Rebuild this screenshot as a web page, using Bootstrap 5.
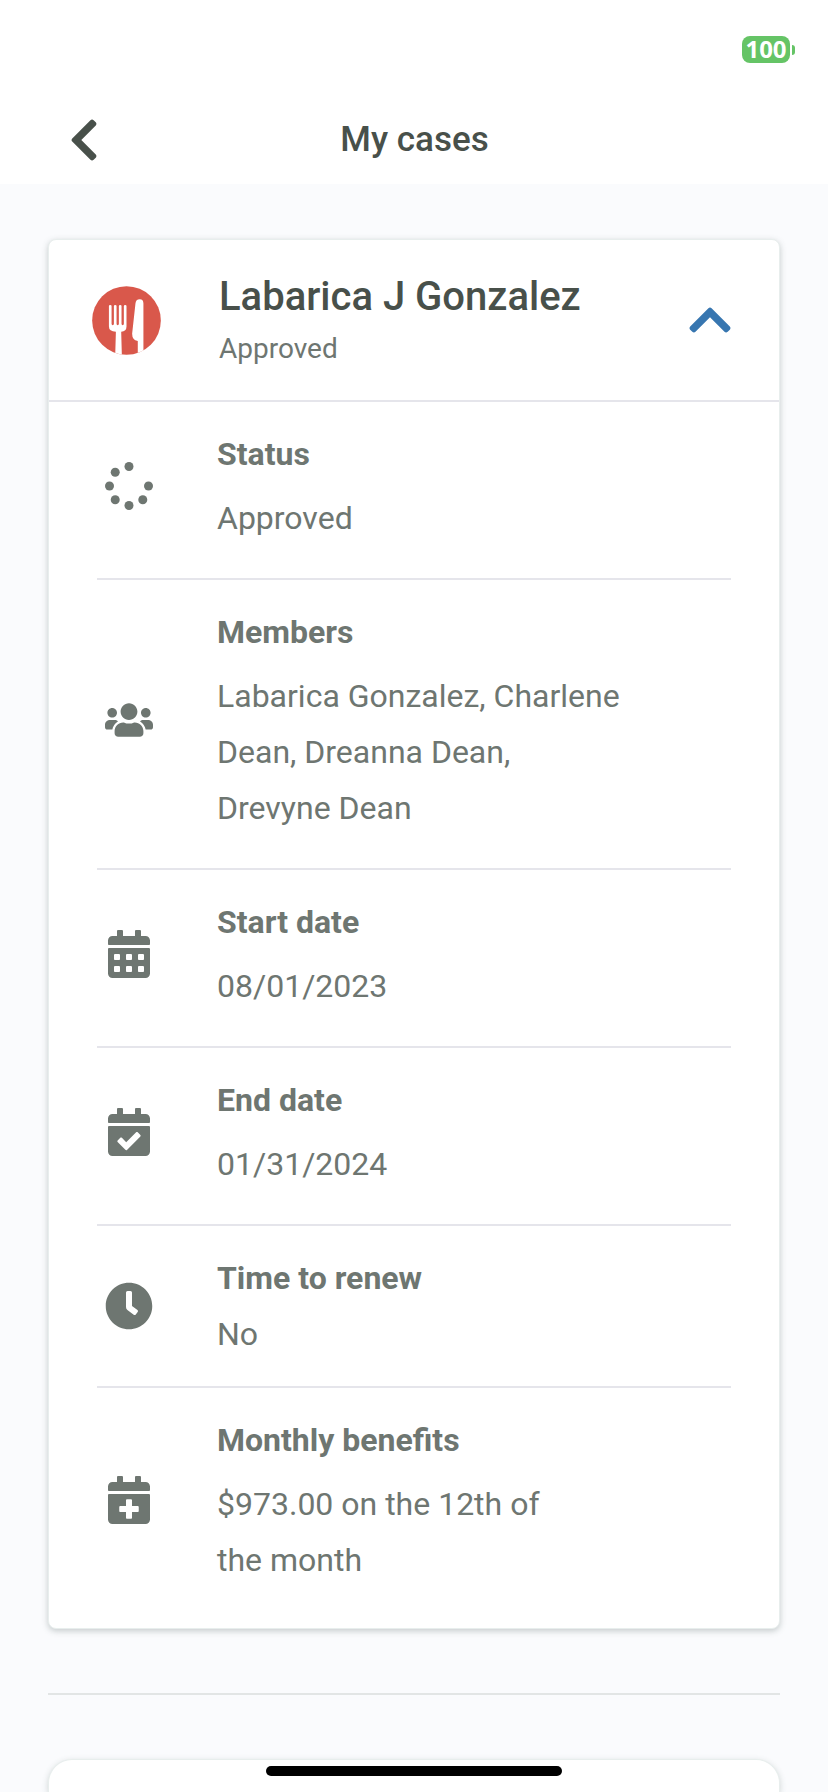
<!DOCTYPE html>
<html lang="en">
<head>
<meta charset="utf-8">
<meta name="viewport" content="width=device-width, initial-scale=1">
<title>My cases</title>
<link href="https://cdn.jsdelivr.net/npm/bootstrap@5.3.0/dist/css/bootstrap.min.css" rel="stylesheet">
<style>
  :root { --ink: #48504a; --muted: #6e7671; --line: #e5e5eb; }
  body { font-family: Roboto, "Liberation Sans", sans-serif; background: #fafbfd; color: var(--muted); font-size: 32px; line-height: 56px; }
  svg { fill: currentColor; display: block; }
  .status-bar { height: 96px; padding: 36px 33px 0; }
  .battery-level { width: 48px; height: 27px; border-radius: 8px; background: #65c466; color: #fff; font: 700 24px/26px "Open Sans", "Noto Sans", sans-serif; }
  .battery-tip { width: 3px; height: 10px; border-radius: 0 4px 4px 0; background: #65c466; margin: 9px 0 0 2px; }
  .title-bar { display: grid; grid-template-columns: 60px 1fr 60px; height: 88px; padding: 0 68px 0 69px; color: var(--ink); }
  .title-bar h1 { font-size: 35px; line-height: 40px; font-weight: 500; }
  .title-bar .btn { color: var(--ink); }
  .page-main { padding: 55px 48px 0; }
  .case-card { border: 1px solid #e8eeed; border-radius: 8px; box-shadow: 0 2px 6px rgba(60, 80, 75, .28); color: inherit; }
  .next-card { border-radius: 24px 24px 0 0; border-bottom: 0; min-height: 33px; box-shadow: 0 2px 6px rgba(60, 80, 75, .22); }
  .case-head { height: 162px; padding: 0 48px 0 43px; border: 0; border-bottom: 2px solid var(--line); background: none; color: inherit; }
  .case-head svg { flex: none; }
  .case-name { font-size: 40px; line-height: 56px; font-weight: 500; color: var(--ink); }
  .case-state { font-size: 28px; line-height: 48px; }
  .case-title { margin-left: 58px; padding-top: 2px; }
  .fold-arrow { color: #3776b0; }
  .fact-list { padding: 0 48px 8px; margin: 0; }
  .fact { padding: 24px 48px 32px 8px; gap: 64px; border-bottom: 2px solid var(--line); }
  .fact:last-child { border-bottom: 0; }
  .fact svg { width: 48px; height: 48px; flex: none; }
  .fact dt { font-weight: 700; }
  .fact dd { margin: 8px 0 0; }
  .fact-tight { padding-bottom: 24px; }
  .fact-tight dd { margin-top: 0; }
  .page-rule { margin: 64px 0; border-top: 2px solid #e2e5e5; opacity: 1; }
  .home-bar { width: 296px; height: 10px; bottom: 16px; background: #000; }
</style>
</head>
<body>
<div class="min-vh-100 d-flex flex-column">
  <header class="bg-white">
    <div class="status-bar d-flex justify-content-end align-items-start">
      <div class="battery-level text-center">100</div>
      <div class="battery-tip"></div>
    </div>
    <nav class="title-bar align-items-center">
      <button class="btn p-0 border-0 text-start" type="button" aria-label="Back">
        <svg width="30" height="48" viewBox="0 0 320 512"><path d="M34.52 239.03L228.87 44.69c9.37-9.37 24.57-9.37 33.94 0l22.67 22.67c9.36 9.36 9.37 24.52.04 33.9L131.49 256l154.02 154.75c9.34 9.38 9.32 24.54-.04 33.9l-22.67 22.67c-9.37 9.37-24.57 9.37-33.94 0L34.52 272.97c-9.37-9.37-9.37-24.57 0-33.94z"/></svg>
      </button>
      <h1 class="m-0 text-center">My cases</h1>
    </nav>
  </header>

  <main class="page-main flex-grow-1 d-flex flex-column">
    <section class="card case-card">
      <button class="case-head d-flex align-items-center w-100 text-start" type="button" data-bs-toggle="collapse" data-bs-target="#case-facts" aria-expanded="true" aria-controls="case-facts">
        <svg width="69" height="69" viewBox="0 0 208 208">
          <defs><clipPath id="plate"><circle cx="104" cy="104" r="104"/></clipPath></defs>
          <circle cx="104" cy="104" r="103.500" fill="#d9584b"/>
          <g clip-path="url(#plate)" fill="#fff">
            <path d="M51 60q0-3 4-3t4 3v54q0 4 3.500 4t3.500-4V60q0-3 4-3t4 3v54q0 4 3.500 4t3.500-4V60q0-3 4-3t4 3v54q0 4 3.500 4t3.500-4V60q0-3 4-3t4 3v62q0 15-16 16l2 70H70l2-70q-21-1-21-16z"/>
            <path d="M131 53q1-13 13-13 11 0 11 13v155h-17v-42q-17-3-17-22z"/>
          </g>
        </svg>
        <span class="case-title flex-grow-1">
          <span class="case-name d-block">Labarica J Gonzalez</span>
          <span class="case-state d-block">Approved</span>
        </span>
        <svg class="fold-arrow" width="42" height="48" viewBox="0 0 448 512"><path d="M240.971 130.524l194.343 194.343c9.373 9.373 9.373 24.569 0 33.941l-22.667 22.667c-9.357 9.357-24.522 9.375-33.901.04L224 227.495 69.255 381.516c-9.379 9.335-24.544 9.317-33.901-.04l-22.667-22.667c-9.373-9.373-9.373-24.569 0-33.941L207.03 130.525c9.372-9.373 24.568-9.373 33.941-.001z"/></svg>
      </button>

      <div class="collapse show" id="case-facts">
        <dl class="fact-list">
          <div class="fact d-flex align-items-center">
            <svg viewBox="0 0 512 512"><circle cx="256" cy="48" r="48"/><circle cx="109" cy="109" r="48"/><circle cx="48" cy="256" r="48"/><circle cx="109" cy="403" r="48"/><circle cx="256" cy="464" r="48"/><circle cx="403" cy="403" r="48"/><circle cx="464" cy="256" r="48"/></svg>
            <div><dt>Status</dt><dd>Approved</dd></div>
          </div>
          <div class="fact d-flex align-items-center">
            <svg viewBox="0 0 640 512"><path d="M96 224c35.3 0 64-28.7 64-64s-28.7-64-64-64-64 28.7-64 64 28.7 64 64 64zm448 0c35.3 0 64-28.7 64-64s-28.7-64-64-64-64 28.7-64 64 28.7 64 64 64zm32 32h-64c-17.6 0-33.500 7.1-45.1 18.6 40.3 22.1 68.9 62 75.1 109.4h66c17.7 0 32-14.3 32-32v-32c0-35.3-28.7-64-64-64zm-256 0c61.9 0 112-50.1 112-112S381.9 32 320 32 208 82.1 208 144s50.1 112 112 112zm76.8 32h-8.3c-20.8 10-43.9 16-68.5 16s-47.6-6-68.5-16h-8.3C179.6 288 128 339.6 128 403.2V432c0 26.5 21.5 48 48 48h288c26.5 0 48-21.5 48-48v-28.8c0-63.6-51.6-115.2-115.2-115.2zm-223.7-13.4C161.5 263.1 145.6 256 128 256H64c-35.3 0-64 28.7-64 64v32c0 17.7 14.3 32 32 32h65.9c6.3-47.4 34.9-87.3 75.2-109.4z"/></svg>
            <div><dt>Members</dt><dd>Labarica Gonzalez, Charlene Dean, Dreanna Dean, Drevyne&nbsp;Dean</dd></div>
          </div>
          <div class="fact d-flex align-items-center">
            <svg viewBox="0 0 512 512"><path transform="translate(32)" d="M0 464c0 26.5 21.5 48 48 48h352c26.5 0 48-21.5 48-48V204c0-6.6-5.4-12-12-12H12c-6.6 0-12 5.4-12 12zm320-196c0-6.6 5.4-12 12-12h40c6.6 0 12 5.4 12 12v40c0 6.6-5.4 12-12 12h-40c-6.6 0-12-5.4-12-12zm0 128c0-6.6 5.4-12 12-12h40c6.6 0 12 5.4 12 12v40c0 6.6-5.4 12-12 12h-40c-6.6 0-12-5.4-12-12zM192 268c0-6.6 5.4-12 12-12h40c6.6 0 12 5.4 12 12v40c0 6.6-5.4 12-12 12h-40c-6.6 0-12-5.4-12-12zm0 128c0-6.6 5.4-12 12-12h40c6.6 0 12 5.4 12 12v40c0 6.6-5.4 12-12 12h-40c-6.6 0-12-5.4-12-12zM64 268c0-6.6 5.4-12 12-12h40c6.6 0 12 5.4 12 12v40c0 6.6-5.4 12-12 12H76c-6.6 0-12-5.4-12-12zm0 128c0-6.6 5.4-12 12-12h40c6.6 0 12 5.4 12 12v40c0 6.6-5.4 12-12 12H76c-6.6 0-12-5.4-12-12zM400 64h-48V12c0-6.6-5.4-12-12-12h-40c-6.6 0-12 5.4-12 12v52H160V12c0-6.6-5.4-12-12-12h-40c-6.6 0-12 5.4-12 12v52H48C21.5 64 0 85.5 0 112v36c0 6.6 5.4 12 12 12h424c6.6 0 12-5.4 12-12v-36c0-26.5-21.5-48-48-48z" fill-rule="evenodd"/></svg>
            <div><dt>Start date</dt><dd>08/01/2023</dd></div>
          </div>
          <div class="fact d-flex align-items-center">
            <svg viewBox="0 0 448 512"><path d="M436 160H12c-6.627 0-12-5.373-12-12v-36c0-26.51 21.49-48 48-48h48V12c0-6.627 5.373-12 12-12h40c6.627 0 12 5.373 12 12v52h128V12c0-6.627 5.373-12 12-12h40c6.627 0 12 5.373 12 12v52h48c26.51 0 48 21.49 48 48v36c0 6.627-5.373 12-12 12zM12 192h424c6.627 0 12 5.373 12 12v260c0 26.51-21.49 48-48 48H48c-26.51 0-48-21.49-48-48V204c0-6.627 5.373-12 12-12zm333.296 95.947l-28.169-28.398c-4.667-4.705-12.265-4.736-16.97-.068L194.12 364.665l-45.98-46.352c-4.667-4.705-12.266-4.736-16.971-.068l-28.397 28.17c-4.705 4.667-4.736 12.265-.068 16.97l82.601 83.269c4.667 4.705 12.265 4.736 16.97.068l142.953-141.805c4.705-4.667 4.736-12.265.068-16.97z" fill-rule="evenodd"/></svg>
            <div><dt>End date</dt><dd>01/31/2024</dd></div>
          </div>
          <div class="fact fact-tight d-flex align-items-center">
            <svg viewBox="0 0 512 512"><path d="M256 8C119 8 8 119 8 256s111 248 248 248 248-111 248-248S393 8 256 8zm92.490 313l-20 25a16 16 0 0 1-22.490 2.500l-67-49.720a40 40 0 0 1-15-31.230V112a16 16 0 0 1 16-16h32a16 16 0 0 1 16 16v144l58 42.500a16 16 0 0 1 2.490 22.500z" fill-rule="evenodd"/></svg>
            <div><dt>Time to renew</dt><dd>No</dd></div>
          </div>
          <div class="fact d-flex align-items-center">
            <svg viewBox="0 0 448 512"><path d="M436 160H12c-6.6 0-12-5.4-12-12v-36c0-26.5 21.5-48 48-48h48V12c0-6.6 5.4-12 12-12h40c6.6 0 12 5.4 12 12v52h128V12c0-6.6 5.4-12 12-12h40c6.6 0 12 5.4 12 12v52h48c26.5 0 48 21.5 48 48v36c0 6.6-5.4 12-12 12zM12 192h424c6.6 0 12 5.4 12 12v260c0 26.5-21.5 48-48 48H48c-26.5 0-48-21.5-48-48V204c0-6.6 5.4-12 12-12zm316 140c0-6.6-5.4-12-12-12h-60v-60c0-6.6-5.4-12-12-12h-40c-6.6 0-12 5.4-12 12v60h-60c-6.6 0-12 5.4-12 12v40c0 6.6 5.4 12 12 12h60v60c0 6.6 5.4 12 12 12h40c6.6 0 12-5.4 12-12v-60h60c6.6 0 12-5.4 12-12v-40z" fill-rule="evenodd"/></svg>
            <div><dt>Monthly benefits</dt><dd>$973.00 on the 12th of the&nbsp;month</dd></div>
          </div>
        </dl>
      </div>
    </section>

    <hr class="page-rule">

    <section class="card case-card next-card flex-grow-1"></section>
  </main>
</div>
<div class="home-bar position-fixed start-50 translate-middle-x rounded-pill"></div>
<script src="https://cdn.jsdelivr.net/npm/bootstrap@5.3.0/dist/js/bootstrap.bundle.min.js"></script>
</body>
</html>
